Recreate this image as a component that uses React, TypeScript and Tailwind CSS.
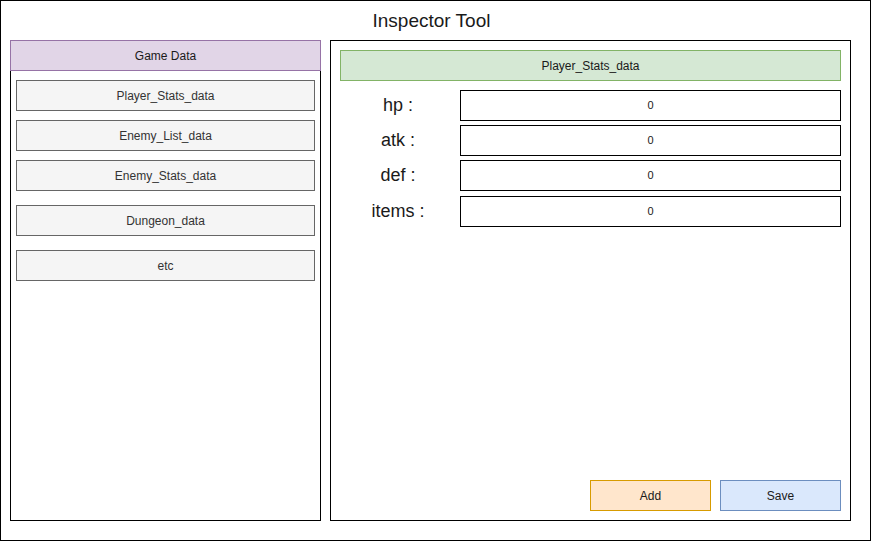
const dataItems = [
  { label: "Player_Stats_data", mt: "mt-[9px]" },
  { label: "Enemy_List_data", mt: "mt-[9px]" },
  { label: "Enemy_Stats_data", mt: "mt-[9px]" },
  { label: "Dungeon_data", mt: "mt-[14px]" },
  { label: "etc", mt: "mt-[14px]" },
];

const fields = [
  { label: "hp :", mt: "mt-[9px]" },
  { label: "atk :", mt: "mt-[4px]" },
  { label: "def :", mt: "mt-[4px]" },
  { label: "items :", mt: "mt-[5px]" },
];

export default function App() {
  return (
    <div className="w-[871px] h-[541px] bg-white border border-black flex flex-col font-['Liberation_Sans',Arial,sans-serif] text-[#1a1a1a]">
      <div className="h-[39px] flex items-center justify-center text-[19px] pt-[1px] pr-[8px]">Inspector Tool</div>

      <div className="flex gap-[9px] pl-[9px]">
        {/* Game data list */}
        <div className="w-[311px] h-[481px] flex flex-col">
          <div className="h-[31px] bg-[#e1d5e7] border border-[#9673a6] flex items-center justify-center text-[12px]">
            Game Data
          </div>
          <div className="flex-1 border border-t-0 border-black px-[5px]">
            {dataItems.map((item) => (
              <div
                key={item.label}
                className={`${item.mt} h-[31px] bg-[#f5f5f5] border border-[#666666] flex items-center justify-center text-[12px] text-[#333333]`}
              >
                {item.label}
              </div>
            ))}
          </div>
        </div>

        {/* Inspector panel */}
        <div className="w-[521px] h-[481px] border border-black flex flex-col p-[9px]">
          <div className="h-[31px] bg-[#d5e8d4] border border-[#82b366] flex items-center justify-center text-[12px]">
            Player_Stats_data
          </div>
          {fields.map((f) => (
            <div key={f.label} className={`${f.mt} flex h-[31px]`}>
              <div className="w-[120px] flex items-center justify-center pr-[4px] text-[18px] text-[#1a1a1a]">{f.label}</div>
              <div className="w-[381px] border border-black flex items-center justify-center text-[11px]">0</div>
            </div>
          ))}
          <div className="mt-auto flex justify-end gap-[9px]">
            <div className="w-[121px] h-[31px] bg-[#ffe6cc] border border-[#d79b00] flex items-center justify-center text-[12px]">
              Add
            </div>
            <div className="w-[121px] h-[31px] bg-[#dae8fc] border border-[#6c8ebf] flex items-center justify-center text-[12px]">
              Save
            </div>
          </div>
        </div>
      </div>
    </div>
  );
}
